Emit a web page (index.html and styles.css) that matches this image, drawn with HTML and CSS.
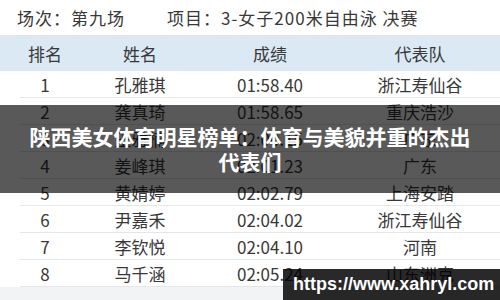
FILE: index.html
```html
<!DOCTYPE html>
<html lang="zh-CN">
<head>
<meta charset="utf-8">
<link rel="stylesheet" href="styles.css">
</head>
<body>
<div class="page">
  <div class="meta">
    <span class="meta-item">场次：第九场</span>
    <span class="meta-item">项目：3-女子200米自由泳 决赛</span>
  </div>
  <div class="table">
    <div class="thead">
      <div class="row head">
        <div>排名</div><div>姓名</div><div>成绩</div><div>代表队</div>
      </div>
    </div>
    <div class="tbody">
      <div class="row"><div>1</div><div>孔雅琪</div><div>01:58.40</div><div>浙江寿仙谷</div></div>
      <div class="row"><div>2</div><div>龚真琦</div><div>01:58.65</div><div>重庆浩沙</div></div>
      <div class="row"><div>3</div><div>王雅楠</div><div>02:00.15</div><div>广东</div></div>
      <div class="row"><div>4</div><div>姜峰琪</div><div>02:01.23</div><div>广东</div></div>
      <div class="row"><div>5</div><div>黄婧婷</div><div>02:02.79</div><div>上海安踏</div></div>
      <div class="row"><div>6</div><div>尹嘉禾</div><div>02:04.02</div><div>浙江寿仙谷</div></div>
      <div class="row"><div>7</div><div>李钦悦</div><div>02:04.10</div><div>河南</div></div>
      <div class="row"><div>8</div><div>马千涵</div><div>02:05.24</div><div>山东洲克</div></div>
    </div>
  </div>
  <div class="overlay">
    <h1 class="title">陕西美女体育明星榜单：体育与美貌并重的杰出代表们</h1>
  </div>
  <div class="watermark">https://www.xahryl.com</div>
</div>
</body>
</html>
```

FILE: styles.css
```css
html, body {
  margin: 0;
  padding: 0;
}
body {
  width: 500px;
  height: 300px;
  overflow: hidden;
  font-family: "Noto Sans CJK SC", "Noto Sans", sans-serif;
  color: #383838;
}
.page {
  position: relative;
  width: 500px;
  height: 300px;
  overflow: hidden;
  background: #f2f3f5;
}
.meta {
  height: 35px;
  background: #fff;
  display: flex;
  align-items: center;
  padding-left: 17px;
  font-size: 17px;
  letter-spacing: 1px;
  gap: 42px;
  white-space: nowrap;
}
.table {
  background: #fff;
}
.thead {
  background: #dbe9f4;
}
.row {
  display: grid;
  grid-template-columns: 50px 140px 120px 180px;
  width: 490px;
  margin-left: 20px;
  height: 26px;
  align-items: center;
  text-align: center;
  font-size: 17px;
  border-bottom: 1px solid #e4e6e9;
  white-space: nowrap;
}
.row.head {
  height: 35px;
  border-top: 1px solid #e1e5ea;
  border-bottom: none;
}
.overlay {
  position: absolute;
  left: 0;
  top: 105px;
  width: 500px;
  height: 88px;
  background: rgba(0, 0, 0, 0.65);
  display: flex;
  align-items: center;
  justify-content: center;
  padding: 0 25px;
  box-sizing: border-box;
}
.title {
  margin: 0;
  color: #fff;
  font-size: 21px;
  line-height: 25px;
  font-weight: 700;
  text-align: center;
}
.watermark {
  position: absolute;
  left: 283px;
  top: 269px;
  width: 217px;
  height: 31px;
  background: rgba(0, 0, 0, 0.84);
  color: #fff;
  font-family: "Liberation Sans", Arial, sans-serif;
  font-weight: 700;
  font-size: 18px;
  display: flex;
  align-items: center;
  padding-left: 10px;
  box-sizing: border-box;
  white-space: nowrap;
}
```
